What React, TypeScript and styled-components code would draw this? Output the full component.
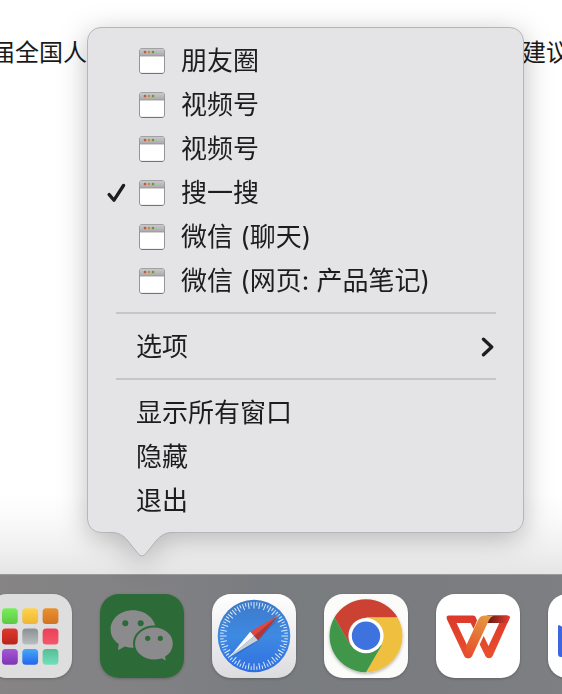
import React from 'react';
import styled, { createGlobalStyle } from 'styled-components';

const GlobalStyle = createGlobalStyle`
  *, *::before, *::after { box-sizing: border-box; }
  body {
    margin: 0;
    overflow: hidden;
    background: #fff;
    color: #1d1d1f;
    font-family: Inter, "Noto Sans CJK SC", sans-serif;
  }
`;

const Desktop = styled.div`
  position: relative;
  display: flex;
  flex-direction: column;
  min-height: 100vh;
  overflow: hidden;
`;

const Document = styled.main`
  flex: 1;
  padding-top: 35px;
  background: linear-gradient(to top, #e5e5e5 0, #f0f0f0 25px, #fafafa 55px, #fff 80px);
`;

const TextLine = styled.p`
  display: flex;
  justify-content: space-between;
  margin: 0 -8px 0 -9px;
  font-size: 24px;
  line-height: 36px;
  white-space: nowrap;
  color: #1a1a1a;
`;

const Popover = styled.div`
  position: absolute;
  top: 27px;
  left: 87px;
  right: 38px;
  filter: drop-shadow(0 6px 14px rgba(0, 0, 0, 0.26));
`;

const Menu = styled.div`
  display: flex;
  flex-direction: column;
  padding: 11px 0 9px;
  border: 1px solid #b6b6b8;
  border-radius: 14px;
  background: #e4e4e6;
`;

const Pointer = styled.svg`
  display: block;
  margin: -2px 0 0 20px;
`;

const Item = styled.button<{ $plain?: boolean }>`
  display: flex;
  align-items: center;
  height: 44px;
  padding: 0 29px 0 ${(p) => (p.$plain ? 48 : 19)}px;
  border: 0;
  background: transparent;
  color: inherit;
  font: inherit;
  font-size: 26px;
  line-height: 44px;
  text-align: left;
  white-space: nowrap;
`;

const CheckSlot = styled.span`
  display: flex;
  width: 32px;
`;

const ItemLabel = styled.span<{ $afterIcon?: boolean }>`
  flex: 1;
  padding-left: ${(p) => (p.$afterIcon ? 16 : 0)}px;
`;

const Separator = styled.hr`
  width: auto;
  height: 2px;
  margin: 9px 27px 11px 28px;
  border: 0;
  background: #c6c6c8;
`;

const DockBar = styled.nav`
  display: flex;
  gap: 28px;
  height: 120px;
  padding: 19px 0 0;
  margin-right: -70px;
  border-top: 1px solid #9a9a9a;
  background: linear-gradient(to right, #868484, #818184 160px, #797c80 260px, #7b7c7f 420px, #7e8083);
`;

const DockButton = styled.button<{ $first?: boolean }>`
  flex: none;
  width: 84px;
  height: 84px;
  margin-left: ${(p) => (p.$first ? -12 : 0)}px;
  padding: 0;
  border: 0;
  border-radius: 19px;
  background: transparent;
  box-shadow: 0 1px 3px rgba(0, 0, 0, 0.22);

  svg { display: block; }
`;

const WindowIcon = () => (
  <svg width="26" height="26" viewBox="0 0 26 26" aria-hidden="true">
    <defs>
      <linearGradient id="titlebar" x1="0" y1="0" x2="0" y2="1">
        <stop offset="0" stopColor="#c9c9c9" />
        <stop offset="1" stopColor="#a9a9a9" />
      </linearGradient>
    </defs>
    <rect x=".5" y=".5" width="25" height="25" rx="2.500" fill="#fff" stroke="#959597" />
    <path d="M.8 8V3.200Q.8.8 3.200.8h19.600q2.400 0 2.400 2.400V8z" fill="url(#titlebar)" />
    <path d="M1 8h24" stroke="#929292" strokeWidth=".8" />
    <path d="M2.500 25.400h21" stroke="#6f6f71" strokeWidth="1" />
    <circle cx="6" cy="4.100" r="1.300" fill="#cb5246" />
    <circle cx="10" cy="4.100" r="1.300" fill="#d08c34" />
    <circle cx="14" cy="4.100" r="1.300" fill="#6f9448" />
  </svg>
);

const CheckIcon = () => (
  <svg width="19" height="20" viewBox="0 0 19 20" aria-hidden="true">
    <path d="M2.200 11.600 7 17.200 16.500 2.500" fill="none" stroke="#1d1d1f" strokeWidth="3.300" strokeLinecap="round" strokeLinejoin="round" />
  </svg>
);

const ChevronIcon = () => (
  <svg width="13" height="20" viewBox="0 0 13 20" aria-hidden="true">
    <path d="M2.500 2.200 10.700 10 2.500 17.800" fill="none" stroke="#1d1d1f" strokeWidth="3.300" strokeLinecap="round" strokeLinejoin="round" />
  </svg>
);

const tiles: [string, string][] = [
  ['#79ed5c', '#5cc943'], ['#ffd34c', '#eeb634'], ['#eb902f', '#d17423'],
  ['#df392c', '#b9241c'], ['#8b9092', '#b9bfc1'], ['#ed4056', '#f2576d'],
  ['#a758d5', '#7e34b5'], ['#45a9f8', '#2465ec'], ['#56bd96', '#72dfba'],
];

const Launchpad = () => (
  <svg width="84" height="84" viewBox="0 0 84 84" aria-hidden="true">
    <rect width="84" height="84" rx="19" fill="#dedede" />
    {tiles.map(([top, bottom], i) => (
      <g key={top}>
        <linearGradient id={`tile${i}`} x1="0" y1="0" x2="0" y2="1">
          <stop offset="0" stopColor={top} />
          <stop offset="1" stopColor={bottom} />
        </linearGradient>
        <rect x={14 + (i % 3) * 20.3} y={14.3 + Math.floor(i / 3) * 20.3} width="15.800" height="15.800" rx="3.500" fill={`url(#tile${i})`} />
      </g>
    ))}
  </svg>
);

const WeChat = () => (
  <svg width="84" height="84" viewBox="0 0 84 84" aria-hidden="true">
    <rect width="84" height="84" rx="19" fill="#2c6b37" />
    <g fill="#8b8a8c">
      <path d="M33 16.200C20.500 16.200 10.600 24.700 10.600 35.300c0 6.100 3.100 11.300 8.200 14.800l-.9 6.200 7-3.700c2.500.8 5.200 1.200 8.100 1.200 12.500 0 22.700-8.300 22.700-18.500S45.500 16.200 33 16.200z" />
      <path d="M54 32.500c-11.100 0-20 7.500-20 17s8.900 17 20 17c2.700 0 5.200-.4 7.400-1.100l6 3.100-1.300-5.400c4.800-3.100 7.700-8 7.700-13.600 0-9.500-8.700-17-19.800-17z" stroke="#2c6b37" strokeWidth="2" />
    </g>
    <g fill="#2c6b37">
      <circle cx="25.300" cy="29.300" r="3" />
      <circle cx="40.700" cy="29.300" r="3" />
      <circle cx="47.700" cy="44.300" r="2.600" />
      <circle cx="60.300" cy="44.300" r="2.600" />
    </g>
  </svg>
);

const Safari = () => (
  <svg width="84" height="84" viewBox="0 0 84 84" aria-hidden="true">
    <defs>
      <linearGradient id="safariCase" x1="0" y1="0" x2="0" y2="1">
        <stop offset="0" stopColor="#fff" />
        <stop offset="1" stopColor="#dcdcdf" />
      </linearGradient>
      <linearGradient id="safariDial" x1="0" y1="0" x2="0" y2="1">
        <stop offset="0" stopColor="#3d79c8" />
        <stop offset=".5" stopColor="#3e8ae2" />
        <stop offset="1" stopColor="#2f6fe0" />
      </linearGradient>
    </defs>
    <rect width="84" height="84" rx="19" fill="url(#safariCase)" />
    <circle cx="42" cy="42" r="36.300" fill="url(#safariDial)" />
    {Array.from({ length: 72 }, (_, i) => (
      <path
        key={i}
        d={i % 2 ? 'M42 8v3.500' : 'M42 8v6.500'}
        stroke="#dbe9fa"
        strokeWidth="1"
        transform={`rotate(${i * 5} 42 42)`}
      />
    ))}
    <path d="M68 23 46 47 20 64z" fill="#1d4c98" opacity=".35" />
    <path d="M67 21 38.200 37.800 42 42z" fill="#e2473f" />
    <path d="M67 21 42 42 45.800 46.200z" fill="#b8352f" />
    <path d="M17.500 63 38.200 37.800 42 42z" fill="#fafafa" />
    <path d="M17.500 63 42 42 45.800 46.200z" fill="#cbd0d8" />
  </svg>
);

const Chrome = () => (
  <svg width="84" height="84" viewBox="0 0 84 84" aria-hidden="true">
    <defs>
      <filter id="chromeShade" x="-20%" y="-20%" width="140%" height="140%">
        <feDropShadow dx="0" dy="1.500" stdDeviation="1.500" floodOpacity=".3" />
      </filter>
    </defs>
    <rect width="84" height="84" rx="19" fill="#fbfbfa" />
    <g filter="url(#chromeShade)">
      <path d="M10.400 23.500A36.500 36.500 0 0 1 73.600 23.500H42L26.200 50.900z" fill="#cb4232" />
      <path d="M73.600 23.500A36.500 36.500 0 0 1 42 78.200L57.800 50.900 42 23.500z" fill="#efc03f" />
      <path d="M42 78.200A36.500 36.500 0 0 1 10.400 23.500L26.200 50.900H57.800z" fill="#40964a" />
    </g>
    <circle cx="42" cy="41.700" r="17.600" fill="#fff" />
    <circle cx="42" cy="41.700" r="14.200" fill="#3d72df" />
  </svg>
);

const Wps = () => (
  <svg width="84" height="84" viewBox="0 0 84 84" aria-hidden="true">
    <defs>
      <linearGradient id="wpsBody" x1="0" y1="0" x2="0" y2="1">
        <stop offset="0" stopColor="#dc382c" />
        <stop offset="1" stopColor="#ea512c" />
      </linearGradient>
      <linearGradient id="wpsBand" x1="52" y1="22" x2="32" y2="64" gradientUnits="userSpaceOnUse">
        <stop offset="0" stopColor="#e59a42" />
        <stop offset=".5" stopColor="#e77134" />
        <stop offset="1" stopColor="#e64b2d" />
      </linearGradient>
      <linearGradient id="wpsFold" x1="54" y1="0" x2="72" y2="0" gradientUnits="userSpaceOnUse">
        <stop offset="0" stopColor="#741c16" />
        <stop offset="1" stopColor="#dc3b2c" />
      </linearGradient>
    </defs>
    <rect width="84" height="84" rx="19" fill="#fff" />
    <path d="M13 21.500H37q2 0 2.800 1.800l1.200 3.200-3.400 8.500-3-6H20.500l10.200 21.500 2.500 13.800H31.500q-2.200 0-3.200-2L11 25.500q-1.500-4 2-4z" fill="url(#wpsBody)" />
    <path d="M52 21.500H71q3.700 0 2 4L56.500 62.300q-1 2-3.500 2t-3.500-2L43.700 50.500l4-8.500 4.800 10L63.300 29H48z" fill="url(#wpsBody)" />
    <path d="M51 21.500H71q3.500 0 2.500 3L71.500 29H50z" fill="url(#wpsFold)" />
    <path d="M49.500 21.500H58q-3.500 1-5 4.500L36 62.300q-1 2-3.300 2-3.200 0-4-2.500L30.700 50.500 42.300 25.500q1.800-4 7.200-4z" fill="url(#wpsBand)" />
  </svg>
);

const BlueApp = () => (
  <svg width="84" height="84" viewBox="0 0 84 84" aria-hidden="true">
    <rect width="84" height="84" rx="19" fill="#fff" />
    <path d="M10 32.500q0-2.500 2-1L42 50 72 31.500q2-1 2 1V60q0 3-3 3H13q-3 0-3-3z" fill="#3d65e0" />
  </svg>
);

const windows = [
  { title: '朋友圈' },
  { title: '视频号' },
  { title: '视频号' },
  { title: '搜一搜', current: true },
  { title: '微信 (聊天)' },
  { title: '微信 (网页: 产品笔记)' },
];

const apps = [
  { name: '启动台', Icon: Launchpad },
  { name: '微信', Icon: WeChat },
  { name: 'Safari', Icon: Safari },
  { name: 'Chrome', Icon: Chrome },
  { name: 'WPS', Icon: Wps },
  { name: '应用', Icon: BlueApp },
];

export default function App() {
  return (
    <Desktop>
      <GlobalStyle />
      <Document>
        <TextLine>
          <span>届全国人</span>
          <span>建议</span>
        </TextLine>
      </Document>

      <DockBar aria-label="程序坞">
        {apps.map(({ name, Icon }, i) => (
          <DockButton key={name} type="button" aria-label={name} $first={i === 0}>
            <Icon />
          </DockButton>
        ))}
      </DockBar>

      <Popover>
        <Menu role="menu" aria-label="微信">
          {windows.map(({ title, current }, i) => (
            <Item key={i} type="button" role="menuitemradio" aria-checked={!!current}>
              <CheckSlot>{current && <CheckIcon />}</CheckSlot>
              <WindowIcon />
              <ItemLabel $afterIcon>{title}</ItemLabel>
            </Item>
          ))}
          <Separator />
          <Item $plain type="button" role="menuitem" aria-haspopup="menu">
            <ItemLabel>选项</ItemLabel>
            <ChevronIcon />
          </Item>
          <Separator />
          {['显示所有窗口', '隐藏', '退出'].map((label) => (
            <Item key={label} $plain type="button" role="menuitem">
              <ItemLabel>{label}</ItemLabel>
            </Item>
          ))}
        </Menu>
        <Pointer width="70" height="27" viewBox="0 0 70 27" aria-hidden="true">
          <path d="M3 0V1.500C12 1.500 16 4 21 10L31 22.500Q35 27.500 39 22.500L49 10C54 4 58 1.500 67 1.500V0z" fill="#e4e4e6" />
          <path d="M3 1.500C12 1.500 16 4 21 10L31 22.500Q35 27.500 39 22.500L49 10C54 4 58 1.500 67 1.500" fill="none" stroke="#b0b0b2" />
        </Pointer>
      </Popover>
    </Desktop>
  );
}
